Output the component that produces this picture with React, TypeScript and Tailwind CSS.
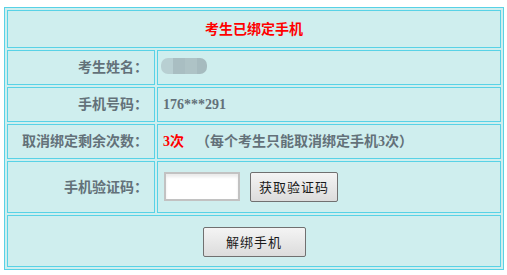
import React from "react";

const cell = "border border-[#58d2e6] bg-[#cfeeee]";
const labelCls =
  "w-[148px] shrink-0 flex items-center justify-end pr-[6px] text-[14px] font-bold text-[#637179]";
const font = { fontFamily: '"Liberation Serif", "Noto Sans CJK SC", serif' };

function Row({ label, h, children }: { label: string; h: string; children: React.ReactNode }) {
  return (
    <div className={`flex gap-[2px] ${h}`}>
      <div className={`${cell} ${labelCls}`}>{label}</div>
      <div className={`${cell} flex-1 flex items-center pl-[5px] text-[14px] font-bold text-[#637179]`}>
        {children}
      </div>
    </div>
  );
}

export default function App() {
  return (
    <div className="w-[507px] h-[275px] bg-white pt-[7px] pl-[4px]" style={font}>
      <div className="w-[500px] border border-[#58d2e6] bg-[#cfeeee] p-[2px] flex flex-col gap-[2px]">
        <div className={`${cell} h-[38px] flex items-center justify-center text-[14px] font-bold text-[#ff0000]`}>
          考生已绑定手机
        </div>
        <Row label="考生姓名：" h="h-[35px]">
          <div className="ml-[-2px] mt-[-3px] flex h-[16px] w-[46px] overflow-hidden rounded-[7px] blur-[0.6px]">
            <div className="w-[12px] bg-[#b8cfd2]" />
            <div className="w-[12px] bg-[#a9bec2]" />
            <div className="w-[12px] bg-[#aec3c6]" />
            <div className="w-[10px] bg-[#a6bbbf]" />
          </div>
        </Row>
        <Row label="手机号码：" h="h-[35px]">
          176***291
        </Row>
        <Row label="取消绑定剩余次数：" h="h-[35px]">
          <span className="text-[#ff0000]">3次</span>
          <span className="ml-[12px]">（每个考生只能取消绑定手机3次）</span>
        </Row>
        <div className="flex gap-[2px] h-[52px]">
          <div className={`${cell} ${labelCls}`}>手机验证码：</div>
          <div className={`${cell} flex-1 flex items-center pl-[6px] gap-[10px]`}>
            <div className="mt-[-1px] h-[29px] w-[76px] border-2 border-[#c2c2c2] bg-white shadow-[inset_0_3px_3px_rgba(0,0,0,0.08)]" />
            <button
              className="h-[30px] w-[88px] rounded-[2px] border border-[#707070] bg-gradient-to-b from-[#f4f4f4] to-[#dcdcdc] text-[13px] tracking-[1px] text-[#1a1a1a]"
              style={{ fontFamily: '"Noto Sans CJK SC", sans-serif' }}
            >
              获取验证码
            </button>
          </div>
        </div>
        <div className={`${cell} h-[52px] flex items-center justify-center`}>
          <button
            className="mt-[2px] h-[30px] w-[103px] rounded-[2px] border border-[#707070] bg-gradient-to-b from-[#f4f4f4] to-[#dcdcdc] text-[13px] tracking-[1px] text-[#1a1a1a]"
            style={{ fontFamily: '"Noto Sans CJK SC", sans-serif' }}
          >
            解绑手机
          </button>
        </div>
      </div>
    </div>
  );
}
